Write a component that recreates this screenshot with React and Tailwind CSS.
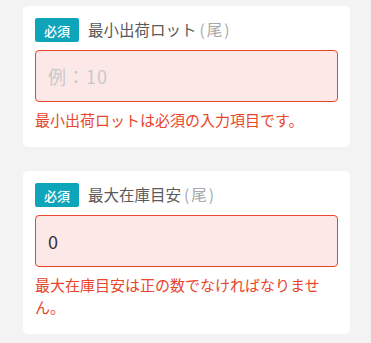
export default function App() {
  const font = { fontFamily: '"Noto Sans CJK JP", "Noto Sans", sans-serif' };
  const Field = ({ label, placeholder, value, error }) => (
    <div className="bg-white rounded-[5px] px-3 pt-3 pb-4">
      <div className="flex items-center h-6">
        <span className="bg-[#0ea5bb] text-white text-[13px] font-medium rounded-[2px] w-11 h-6 flex items-center justify-center leading-none">必須</span>
        <span className="ml-[9px] text-[15.5px] text-[#5a5a5a] leading-none flex items-center">
          {label}
          <span className="text-[#a8a8a8] ml-[3px]">(</span>
          <span className="text-[#a8a8a8] mx-[2px]">尾</span>
          <span className="text-[#a8a8a8]">)</span>
        </span>
      </div>
      <div className="mt-2 h-[52px] border border-[#e8452c] bg-[#fde8e8] rounded-[4px] flex items-center pl-3">
        {value ? (
          <span className="text-[18px] text-[#333]">{value}</span>
        ) : (
          <span className="text-[18px] tracking-[1px] text-[#c8c8c8]">{placeholder}</span>
        )}
      </div>
      <p className="mt-[7px] text-[15px] leading-[22px] text-[#e8452c]">{error}</p>
    </div>
  );
  return (
    <div className="w-[371px] h-[343px] bg-[#f3f3f3] pt-[6px] pl-[23px] pr-[21px]" style={font}>
      <div className="flex flex-col gap-[24px]">
        <Field label="最小出荷ロット" placeholder="例：10" error="最小出荷ロットは必須の入力項目です。" />
        <Field label="最大在庫目安" value="0" error="最大在庫目安は正の数でなければなりません。" />
      </div>
    </div>
  );
}
